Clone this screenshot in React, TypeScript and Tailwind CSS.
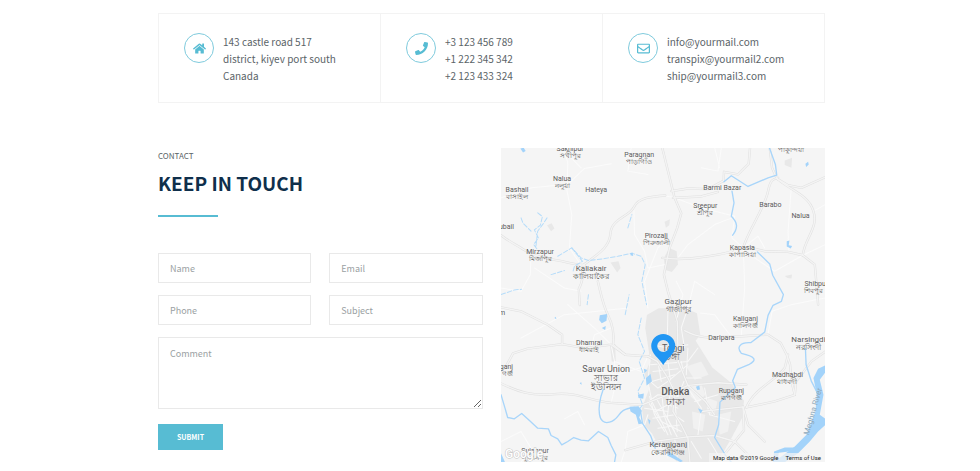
// Contact page section: contact details, message form and location map
import { FaHome, FaPhone, FaRegEnvelope } from 'react-icons/fa';
import type { IconType } from 'react-icons';

type Detail = { icon: IconType; lines: string[] };

const details: Detail[] = [
    { icon: FaHome, lines: ['143 castle road 517', 'district, kiyev port south', 'Canada'] },
    { icon: FaPhone, lines: ['+3 123 456 789', '+1 222 345 342', '+2 123 433 324'] },
    { icon: FaRegEnvelope, lines: ['info@yourmail.com', 'transpix@yourmail2.com', 'ship@yourmail3.com'] },
];

const fields = [
    { name: 'name', label: 'Name', type: 'text' },
    { name: 'email', label: 'Email', type: 'email' },
    { name: 'phone', label: 'Phone', type: 'tel' },
    { name: 'subject', label: 'Subject', type: 'text' },
];

const fieldClass =
    'block w-full border border-[#e9e9e9] bg-white px-[11px] text-[9px] text-[#5b6468] placeholder:text-[#9a9fa3] outline-none focus:border-[#57bcd3]';

type Place = {
    x: number;
    y: number;
    name?: string;
    local?: string[];
    size?: 'sm' | 'md' | 'lg' | 'xl';
    anchor?: 'start' | 'middle' | 'end';
};

const places: Place[] = [
    { x: 69, y: 3, name: 'Sakhipur', local: ['সখীপুর'] },
    { x: 138, y: 9, name: 'Paragnan', local: ['পাড়াগাঁও'] },
    { x: 290, y: -3, local: ['পাকুন্দিয়া'] },
    { x: 61, y: 33, name: 'Nalua', local: ['নলুয়া'] },
    { x: 16, y: 44, name: 'Bashail', local: ['বাসাইল'] },
    { x: 95, y: 44, name: 'Hateya' },
    { x: 13, y: 81, name: 'ubail', anchor: 'end' },
    { x: 155, y: 90, name: 'Pirozali', local: ['পিরুজালী'] },
    { x: 39, y: 106, name: 'Mirzapur', local: ['মির্জাপুর'] },
    { x: 90, y: 123, name: 'Kaliakair', local: ['কালিয়াকৈর'], size: 'md' },
    { x: 221, y: 42, name: 'Barmi Bazar' },
    { x: 204, y: 60, name: 'Sreepur', local: ['শ্রীপুর'] },
    { x: 269, y: 59, name: 'Barabo' },
    { x: 299, y: 70, name: 'Nalua' },
    { x: 241, y: 102, name: 'Kapasia', local: ['কাপাসিয়া'] },
    { x: 303, y: 138, name: 'Shibpur', local: ['শিবপুর'], anchor: 'start' },
    { x: 177, y: 156, name: 'Gazipur', local: ['গাজীপুর'], size: 'md' },
    { x: 4, y: 167, name: 'm', anchor: 'end' },
    { x: 88, y: 197, name: 'Dhamrai', local: ['ধামরাই'] },
    { x: 12, y: 221, name: 'ganj', local: ['গঞ্জ'], anchor: 'end' },
    { x: 105, y: 224, name: 'Savar Union', local: ['সাভার', 'ইউনিয়ন'], size: 'lg' },
    { x: 34, y: 305, name: 'Sujanpur', local: ['সুজানপুর'] },
    { x: 244, y: 173, name: 'Kaliganj', local: ['কালিগঞ্জ'] },
    { x: 220, y: 192, name: 'Daripara' },
    { x: 307, y: 194, name: 'Narsingdi', local: ['নরসিংদী'], size: 'md' },
    { x: 172, y: 203, name: 'Tongi', local: ['টঙ্গী'], size: 'lg' },
    { x: 286, y: 229, name: 'Madhabdi', local: ['মাধবদী'] },
    { x: 174, y: 247, name: 'Dhaka', local: ['ঢাকা'], size: 'xl' },
    { x: 230, y: 245, name: 'Rupganj', local: ['রূপগঞ্জ'] },
    { x: 167, y: 299, name: 'Keraniganj', local: ['কেরানীগঞ্জ'], size: 'md' },
];

const labelSize = {
    sm: { className: 'text-[7px]', step: 7 },
    md: { className: 'text-[8px]', step: 8 },
    lg: { className: 'text-[9px]', step: 9 },
    xl: { className: 'text-[10px] font-medium', step: 10 },
};

// Geometry below is drawn at three units per map pixel
const highways = [
    'M0,262 C22,280 45,290 66,304 S110,328 160,336 S210,350 250,352',
    'M246,352 C290,318 325,300 328,256 S385,206 398,178 S450,146 492,143',
    'M238,352 C250,380 244,400 233,424 L236,471',
    'M290,400 C300,440 305,470 320,500 S340,560 336,590 L372,620 L440,625',
    'M483,0 L520,150 L540,196 L528,240 L505,300 L488,380 L500,430 L528,520 L531,640',
    'M483,330 C540,338 590,330 650,320 S690,305 700,300',
    'M725,300 C745,240 790,180 800,130 S826,98 830,90',
    'M805,0 L812,60 L826,92 L860,112 L900,120 L972,88',
    'M826,92 C870,130 920,140 936,190 S910,270 904,322 L860,312 L790,310 L740,298',
    'M904,322 L940,350 L946,420 L950,470',
    'M667,100 L668,72 L710,80 L742,48 L746,0',
    'M510,130 L560,122 L620,124 L665,100 M515,150 L600,146 L650,132',
    'M0,478 L60,490 L140,530 L183,560 L183,588',
    'M183,588 L80,602 L36,616 L12,660 L0,668',
    'M183,588 L250,600 L330,590 L372,620',
    'M0,706 C50,730 90,745 160,738 S270,760 330,764 L422,770 L500,740 L560,712 L650,704 L735,710',
    'M550,548 C600,575 640,568 690,566 S760,562 800,560 L838,585 L856,620 L866,650 L870,700 L880,740',
    'M735,778 L820,760 L880,740 L884,700 L930,640 L972,610',
    'M735,778 C760,720 820,700 850,660 L860,620',
    'M600,790 L725,776 L728,846 L650,942',
    'M725,776 L740,830 L790,880 M531,640 L560,712 L612,760 L640,800',
    'M372,906 L470,878 L560,866 L640,862 L700,880 L760,940',
    'M440,625 L468,640 L500,690 L520,730 L515,790 L540,830 L560,870 L566,942',
];

const minorRoads = [
    'M183,0 L200,42 L198,130 L212,200 L205,300 L240,352',
    'M0,150 L92,120 L170,112 L200,110 L250,62 L330,48',
    'M390,0 L380,70 L440,80 M240,60 L200,20',
    'M90,300 L88,380 L60,430 L0,420 M100,360 L190,420 L240,430',
    'M398,178 L400,260 L430,310 L440,360 L492,350',
    'M483,142 L520,150 L600,180 L700,205 L692,270 L725,300',
    'M530,330 L560,290 L640,230 L692,210',
    'M726,300 L730,420 L720,560 M725,300 L770,265 L790,300',
    'M800,560 L812,490 L870,470 L972,450 M904,322 L820,370 L760,330',
    'M936,190 L972,170 M904,322 L972,290 M870,112 L860,250 L862,312',
    'M600,60 L650,70 L660,0 M640,0 L655,60',
    'M200,470 L280,540 L330,590 M60,570 L190,500 L380,480',
    'M330,590 L340,640 L420,670 L440,625 M340,640 L345,700 L330,764',
    'M0,880 L60,850 L90,900 L60,942 M190,812 L230,790 L250,830',
    'M372,906 L380,850 L430,830 L440,800 M360,942 L372,906',
    'M290,670 L350,680 L415,660 M270,600 L280,560 L330,540',
    'M560,480 L580,400 L640,440 M440,480 L430,400 L470,300 L490,280',
    'M525,520 L545,440 L525,400 M690,566 L640,500 L597,495',
];

const streets = [
    'M428,770 L470,740 L530,745 L548,700 M440,760 L480,820 L540,850',
    'M436,690 L470,720 L500,700 L560,650 M448,620 L440,700 L452,760 L500,860',
    'M462,790 L500,770 L530,780 M455,810 L520,800 L548,820 M470,840 L540,830',
    'M480,720 L488,800 L510,860 M505,745 L498,810 L530,870 M452,700 L520,680',
    'M448,650 L560,640 L590,600 M455,670 L530,662 M470,640 L480,700',
    'M500,640 L508,700 L530,745 M540,640 L550,690 L600,690 M560,600 L555,680',
    'M430,780 L500,790 M445,745 L460,800 L490,850 M520,740 L528,850 M465,750 L520,850',
    'M450,590 L500,600 L560,590 M500,490 L498,580 M560,480 L540,540 L550,600',
    'M560,720 L600,780 L590,860 M610,720 L625,800 L700,820 M580,760 L650,740',
    'M570,880 L600,930 M480,880 L500,930 M520,870 L530,940 M620,870 L650,920',
];

const streams = [
    'M110,195 L124,206 L118,232 L100,246 L112,270 L98,290 L110,306 M138,210 L126,228 L110,250 L104,300 M60,210 L66,226 L90,250',
    'M170,325 L212,300 L240,330 L262,338 L310,332 L350,325 L392,316 L420,325 L432,350 L422,400 L436,470',
    'M212,300 L244,340 L220,355 L216,370 M0,440 L40,426 L62,424 M150,380 L190,368 M262,440 L258,470 M380,240 L392,200',
    'M372,500 L384,440 M420,510 L410,560 L430,610 L414,640 L430,690 L410,730 L424,770 L410,790',
];

const rivers = [
    'M0,740 L12,780 L20,808 L40,812 L62,796 L86,818 L110,840 L142,842 L150,862 L170,872 L182,890 L200,880 L218,868 L240,876 L262,878 L292,850 L320,868 L330,892 L344,920 L340,942',
    'M668,102 L690,84 L740,116 L800,90 L826,82 L822,50 L804,0 M692,130 L698,165 L690,205 C710,225 710,240 694,262',
    'M768,312 L805,348 L814,382 L846,440 L840,460 L815,472 L800,502 L790,552 L748,584 C715,582 705,598 720,616 C760,625 770,635 742,650 L708,664 L694,698 L702,718 L656,762 L652,830 L640,868 L672,920 L690,942',
    'M306,724 C286,780 290,832 325,822 S345,782 400,778 L418,790 L424,826 L448,862 L462,900',
    'M912,602 L914,650 L930,700 L948,735',
];

const lakes = [
    'M58,2 L68,0 L74,10 L66,14 Z',
    'M296,502 L318,498 L316,518 L302,526 L294,516 Z',
    'M302,540 L314,534 L312,546 Z',
    'M388,316 L394,314 L396,324 L388,322 Z',
    'M856,280 L864,278 L862,292 L872,294 L868,302 L856,296 Z',
    'M912,48 L920,42 L922,50 L914,58 Z',
    'M385,776 L412,774 L422,788 L414,808 L424,826 L412,828 L404,800 L388,790 Z',
    'M434,690 L448,678 L452,700 L436,712 Z',
    'M410,740 L428,736 L426,752 L412,750 Z',
    'M584,716 L594,712 L596,724 L588,726 Z',
    'M440,812 L448,818 L444,830 Z',
    'M590,780 L604,786 L598,796 Z',
    'M428,662 L438,666 L430,676 Z',
    'M160,510 L164,506 L166,514 Z',
    'M236,706 L240,702 L242,710 Z',
];

function MapTerrain() {
    return (
        <g transform="scale(0.3333)" fill="none" strokeLinejoin="round" strokeLinecap="round">
            <g fill="#e8e8e8">
                <path d="M437,501 L472,481 L552,481 L587,496 L597,560 L583,578 L633,658 L688,703 L728,758 L723,808 L690,870 L648,943 L530,943 L500,915 L468,885 L452,855 L428,830 L422,781 L445,720 L430,680 L447,640 L440,590 L432,540 Z" />
                <path d="M505,300 L526,310 L530,350 L512,372 L492,366 L488,330 Z" />
                <path d="M138,232 L152,226 L160,242 L150,250 Z M328,344 L352,340 L358,360 L348,374 Z M850,38 L872,30 L870,60 L850,52 Z M490,222 L506,214 L504,232 L494,240 Z" />
                <path d="M850,384 L872,380 L870,392 L858,390 Z M326,590 L342,588 L344,640 L332,640 Z" />
            </g>
            <g fill="#f1f1f1">
                <path d="M566,712 L600,706 L612,740 L590,765 L568,745 Z" />
                <path d="M620,750 L648,760 L640,800 L616,792 Z" />
                <path d="M555,655 L600,640 L622,680 L580,695 Z" />
                <path d="M572,790 L612,800 L604,850 L576,840 Z M650,800 L690,790 L680,850 L655,860 Z" />
            </g>
            {minorRoads.map((d) => (
                <path key={d} d={d} stroke="#fbfbfb" strokeWidth="3" />
            ))}
            {streets.map((d) => (
                <path key={d} d={d} stroke="#f8f8f8" strokeWidth="3" />
            ))}
            {highways.map((d) => (
                <path key={d} d={d} stroke="#e0e0e0" strokeWidth="7" />
            ))}
            {highways.map((d) => (
                <path key={d} d={d} stroke="#f4f4f4" strokeWidth="4" />
            ))}
            {streams.map((d) => (
                <path key={d} d={d} stroke="#b5dcfa" strokeWidth="3" strokeDasharray="14 6" />
            ))}
            {rivers.map((d) => (
                <path key={d} d={d} stroke="#a8d5fa" strokeWidth="4" />
            ))}
            <g fill="#a3d3fa">
                <path d="M972,652 L950,662 L936,690 L946,740 L942,790 L915,860 L880,895 L840,925 L815,942 L850,942 L890,915 L925,880 L950,850 L972,830 L972,812 L955,800 L966,740 L955,695 L972,672 Z" />
                <path d="M815,942 L818,910 L850,898 L880,898 L862,910 L832,914 L828,942 Z" />
                <path d="M0,915 L12,942 L0,942 Z M502,910 L545,938 L538,942 L498,922 Z" />
                {lakes.map((d) => (
                    <path key={d} d={d} />
                ))}
            </g>
        </g>
    );
}

function PlaceLabel({ place }: { place: Place }) {
    const { className, step } = labelSize[place.size ?? 'sm'];
    return (
        <text textAnchor={place.anchor ?? 'middle'} className={className}>
            {place.name && <tspan x={place.x} y={place.y}>{place.name}</tspan>}
            {place.local?.map((line, i) => (
                <tspan key={line} x={place.x} y={place.y + step * (i + 1)}>
                    {line}
                </tspan>
            ))}
        </text>
    );
}

function LocationMap() {
    return (
        <div className="relative h-[314px] overflow-hidden bg-[#f5f5f5] font-[Roboto,sans-serif]">
            <svg
                viewBox="0 0 324 314"
                preserveAspectRatio="xMidYMid slice"
                className="block h-full w-full"
                role="img"
                aria-label="Map of Dhaka"
            >
                <MapTerrain />
                <g fill="#5c5c5c">
                    {places.map((place) => (
                        <PlaceLabel key={`${place.x}-${place.y}`} place={place} />
                    ))}
                </g>
                <text
                    transform="translate(314 264) rotate(-74)"
                    textAnchor="middle"
                    className="text-[8px]"
                    fill="#8fa9bb"
                >
                    Meghna River
                </text>
                <text
                    x="4"
                    y="310"
                    className="text-[12px] font-medium"
                    fill="#ffffff"
                    stroke="#c4c4c4"
                    strokeWidth="1"
                    paintOrder="stroke"
                >
                    Google
                </text>
                <path
                    fill="#2196f3"
                    fillRule="evenodd"
                    d="M162,217 C158,210 150,206 150,198 A12,12 0 0 1 174,198 C174,206 166,210 162,217 Z M162,192 A6,6 0 1 0 162,204 A6,6 0 1 0 162,192 Z"
                />
            </svg>
            <div className="absolute right-0 bottom-0 flex gap-[7px] bg-[#f5f5f5]/70 px-1 text-[6px] leading-[9px] text-[#222222]">
                <span>Map data ©2019 Google</span>
                <a href="#terms">Terms of Use</a>
            </div>
        </div>
    );
}

function ContactForm() {
    return (
        <form className="mt-9" onSubmit={(e) => e.preventDefault()}>
            <div className="grid grid-cols-2 gap-x-[18px] gap-y-3">
                {fields.map((field) => (
                    <input
                        key={field.name}
                        type={field.type}
                        name={field.name}
                        aria-label={field.label}
                        placeholder={field.label}
                        className={`${fieldClass} h-[30px]`}
                    />
                ))}
                <textarea
                    name="comment"
                    aria-label="Comment"
                    placeholder="Comment"
                    className={`${fieldClass} col-span-2 h-[72px] resize py-2 leading-4`}
                />
            </div>
            <button
                type="submit"
                className="mt-[15px] h-[26px] bg-[#57bcd3] px-[19px] text-[7px] font-bold text-white uppercase"
            >
                Submit
            </button>
        </form>
    );
}

export default function App() {
    return (
        <main className="bg-white pt-[13px] font-['Noto_Sans_CJK_SC','Noto_Sans',sans-serif] text-[#5b6468]">
            <div className="mx-auto max-w-[670px] pl-[3px]">
                <div className="grid grid-cols-3 border-y border-r border-[#f3f3f3]">
                    {details.map(({ icon: Icon, lines }) => (
                        <div
                            key={lines[0]}
                            className="flex items-start gap-[9px] border-l border-[#f3f3f3] px-[25px] pt-[19px] pb-[18px]"
                        >
                            <span className="flex size-[30px] shrink-0 items-center justify-center rounded-full border border-[#7fcbdd]">
                                <Icon className="size-[13px] text-[#57bcd3]" />
                            </span>
                            <p className="text-[10px] leading-[17px] whitespace-nowrap">
                                {lines.map((line) => (
                                    <span key={line} className="block">
                                        {line}
                                    </span>
                                ))}
                            </p>
                        </div>
                    ))}
                </div>

                <section className="mt-[45px] grid grid-cols-2 gap-[18px]">
                    <div>
                        <p className="text-[8px] leading-4 uppercase">Contact</p>
                        <h2 className="mt-[7px] text-[19px] leading-6 font-bold text-[#0f2f4b] uppercase">
                            Keep in touch
                        </h2>
                        <div className="mt-5 h-[2px] w-[60px] bg-[#57bcd3]" />
                        <ContactForm />
                    </div>
                    <LocationMap />
                </section>
            </div>
        </main>
    );
}
